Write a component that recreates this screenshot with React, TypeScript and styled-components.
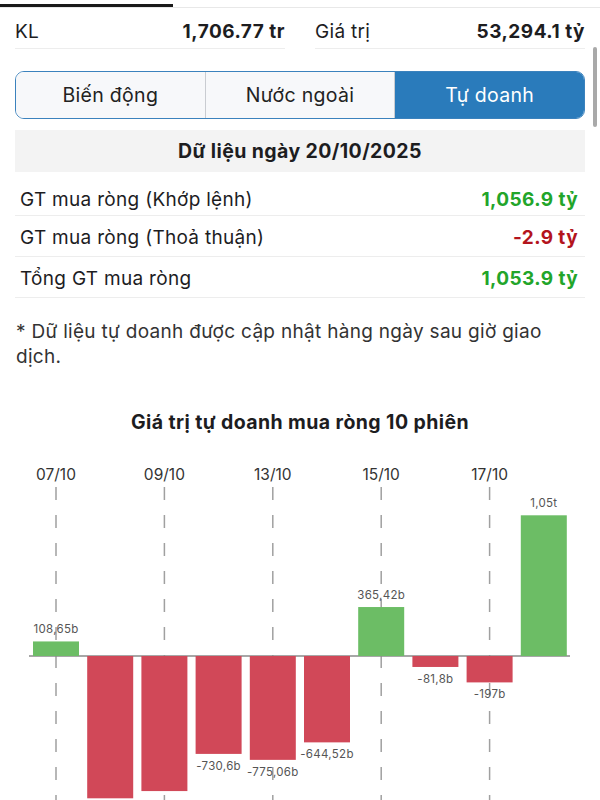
import React from 'react';
import styled, { createGlobalStyle } from 'styled-components';

const GlobalStyle = createGlobalStyle`
  html, body {
    margin: 0;
    padding: 0;
    background: #fff;
  }
  body {
    font-family: Inter, "Noto Sans", sans-serif;
    color: #1d1d1f;
    -webkit-font-smoothing: antialiased;
  }
`;

const Page = styled.div`
  position: relative;
  width: 600px;
  height: 800px;
  overflow: hidden;
`;

const TabStrip = styled.div`
  padding-top: 4px;
  border-bottom: 1px solid #e8e8e8;
`;

const TabIndicator = styled.div`
  width: 173px;
  height: 3px;
  background: #1a1a1a;
`;

const ScrollThumb = styled.div`
  position: absolute;
  right: 3px;
  top: 47px;
  width: 4px;
  height: 80px;
  border-radius: 2px;
  background: #a9a9a9;
`;

const StatsGrid = styled.div`
  display: grid;
  grid-template-columns: 1fr 1fr;
  column-gap: 30px;
  padding: 0 15px;
`;

const StatCell = styled.div`
  display: flex;
  align-items: center;
  justify-content: space-between;
  box-sizing: border-box;
  height: 41px;
  padding-top: 7px;
  border-bottom: 1px solid #ededed;
  font-size: 19px;
  letter-spacing: 0.3px;
`;

const StatValue = styled.span`
  font-weight: 700;
  letter-spacing: 0.5px;
`;

const Segmented = styled.div`
  display: flex;
  box-sizing: border-box;
  height: 48px;
  margin: 22px 15px 0;
  border: 1px solid #3b82bd;
  border-radius: 9px;
  overflow: hidden;
`;

const Segment = styled.div<{ $active?: boolean }>`
  flex: 1;
  display: flex;
  align-items: center;
  justify-content: center;
  font-size: 19.5px;
  letter-spacing: 0.3px;
  background: ${p => (p.$active ? '#2a7bbb' : '#f7f8fa')};
  color: ${p => (p.$active ? '#fff' : '#222')};
  & + & {
    border-left: 1px solid #c9ccd1;
  }
`;

const DateHeader = styled.div`
  display: flex;
  align-items: center;
  justify-content: center;
  height: 42px;
  margin: 11px 15px 0;
  background: #f3f3f3;
  font-size: 19.5px;
  letter-spacing: 0.4px;
  font-weight: 700;
`;

const DataTable = styled.div`
  margin: 0 15px;
`;

const DataRow = styled.div<{ $first?: boolean }>`
  display: flex;
  align-items: center;
  justify-content: space-between;
  box-sizing: border-box;
  height: ${p => (p.$first ? 44 : 41)}px;
  padding: ${p => (p.$first ? 11 : 2)}px 7px 0 5px;
  border-bottom: 1px solid #ededed;
  font-size: 19px;
  letter-spacing: 0.3px;
`;

const DataValue = styled.span<{ $tone: 'up' | 'down' }>`
  font-weight: 700;
  letter-spacing: 0.4px;
  color: ${p => (p.$tone === 'up' ? '#22a52a' : '#b3141d')};
`;

const Note = styled.p`
  margin: 21px 16px 0;
  font-size: 19px;
  line-height: 25px;
  letter-spacing: 0.3px;
  color: #333;
`;

const ChartTitle = styled.h3`
  margin: 41px 0 0;
  text-align: center;
  font-size: 19.5px;
  line-height: 24px;
  letter-spacing: 0.4px;
  font-weight: 700;
  color: #1d1d1f;
`;

const ChartSvg = styled.svg`
  display: block;
  margin-top: 16px;
`;

const stats = [
  { label: 'KL', value: '1,706.77 tr' },
  { label: 'Giá trị', value: '53,294.1 tỷ' },
];

const rows: { label: string; value: string; tone: 'up' | 'down' }[] = [
  { label: 'GT mua ròng (Khớp lệnh)', value: '1,056.9 tỷ', tone: 'up' },
  { label: 'GT mua ròng (Thoả thuận)', value: '-2.9 tỷ', tone: 'down' },
  { label: 'Tổng GT mua ròng', value: '1,053.9 tỷ', tone: 'up' },
];

// labels of the two deepest bars fall below the visible area
const sessions = [
  { date: '07/10', value: 108.65, label: '108,65b' },
  { date: '08/10', value: -1062, label: '' },
  { date: '09/10', value: -1008, label: '' },
  { date: '10/10', value: -730.6, label: '-730,6b' },
  { date: '13/10', value: -775.06, label: '-775,06b' },
  { date: '14/10', value: -644.52, label: '-644,52b' },
  { date: '15/10', value: 365.42, label: '365,42b' },
  { date: '16/10', value: -81.8, label: '-81,8b' },
  { date: '17/10', value: -197, label: '-197b' },
  { date: '20/10', value: 1050, label: '1,05t' },
];

const BAR_X0 = 33;
const BAR_STEP = 54.2;
const BAR_W = 46;
const ZERO_Y = 206;
const SCALE = 0.134;

function NetBuyChart() {
  return (
    <ChartSvg width={600} height={360} viewBox="0 0 600 360">
      {sessions.map((s, i) => {
        if (i % 2 !== 0) return null;
        const cx = BAR_X0 + i * BAR_STEP + BAR_W / 2;
        return (
          <g key={s.date}>
            <text
              x={cx}
              y={30}
              textAnchor="middle"
              fontSize={15.5}
              fill="#333"
              fontFamily="Inter, sans-serif"
            >
              {s.date}
            </text>
            <line
              x1={cx}
              x2={cx}
              y1={37}
              y2={360}
              stroke="#a0a0a0"
              strokeWidth={1.5}
              strokeDasharray="13 15"
            />
          </g>
        );
      })}
      <line x1={29} x2={570} y1={ZERO_Y} y2={ZERO_Y} stroke="#8a8a8a" strokeWidth={1.5} />
      {sessions.map((s, i) => {
        const x = BAR_X0 + i * BAR_STEP;
        const h = Math.abs(s.value) * SCALE;
        const up = s.value >= 0;
        const y = up ? ZERO_Y - h : ZERO_Y;
        const ly = up ? y - 8 : y + h + 16;
        return (
          <g key={s.date + 'b'}>
            <rect x={x} y={y} width={BAR_W} height={h} fill={up ? '#6cbd65' : '#d14858'} />
            {s.label && (
              <text
                x={x + BAR_W / 2}
                y={ly}
                textAnchor="middle"
                fontSize={11.5}
                letterSpacing={0.3}
                fill="#555"
                fontFamily="Inter, sans-serif"
              >
                {s.label}
              </text>
            )}
          </g>
        );
      })}
    </ChartSvg>
  );
}

export default function App() {
  return (
    <Page>
      <GlobalStyle />
      <TabStrip>
        <TabIndicator />
      </TabStrip>
      <ScrollThumb />
      <StatsGrid>
        {stats.map(s => (
          <StatCell key={s.label}>
            <span>{s.label}</span>
            <StatValue>{s.value}</StatValue>
          </StatCell>
        ))}
      </StatsGrid>
      <Segmented>
        <Segment>Biến động</Segment>
        <Segment>Nước ngoài</Segment>
        <Segment $active>Tự doanh</Segment>
      </Segmented>
      <DateHeader>Dữ liệu ngày 20/10/2025</DateHeader>
      <DataTable>
        {rows.map((r, i) => (
          <DataRow key={r.label} $first={i === 0}>
            <span>{r.label}</span>
            <DataValue $tone={r.tone}>{r.value}</DataValue>
          </DataRow>
        ))}
      </DataTable>
      <Note>* Dữ liệu tự doanh được cập nhật hàng ngày sau giờ giao dịch.</Note>
      <ChartTitle>Giá trị tự doanh mua ròng 10 phiên</ChartTitle>
      <NetBuyChart />
    </Page>
  );
}
